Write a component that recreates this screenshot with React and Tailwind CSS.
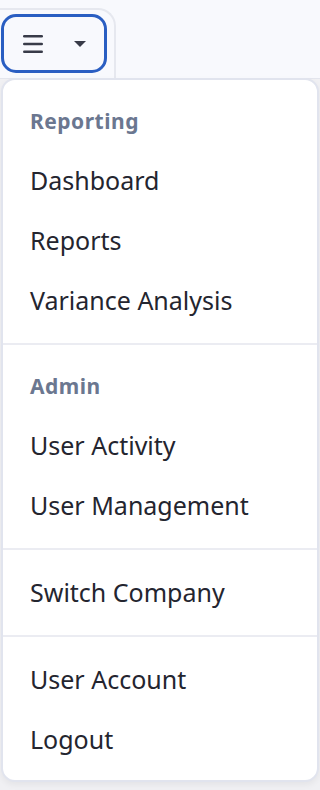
import React from "react";

const sections = [
  { title: "Reporting", items: ["Dashboard", "Reports", "Variance Analysis"] },
  { title: "Admin", items: ["User Activity", "User Management"] },
  { items: ["Switch Company"] },
  { items: ["User Account", "Logout"] },
];

function Hamburger() {
  return (
    <svg width="20" height="20" viewBox="0 0 20 20" className="block">
      <rect x="0" y="1" width="20" height="2.6" rx="1.3" fill="#383b48" />
      <rect x="0" y="8.7" width="20" height="2.6" rx="1.3" fill="#383b48" />
      <rect x="0" y="16.4" width="20" height="2.6" rx="1.3" fill="#383b48" />
    </svg>
  );
}

function Caret() {
  return (
    <svg width="12" height="6" viewBox="0 0 12 6" className="block">
      <path d="M0 0 L12 0 L6 6 Z" fill="#383b48" />
    </svg>
  );
}

export default function App() {
  return (
    <div className="min-h-[790px] w-[320px] bg-[#f0f0f3] font-['Noto_Sans','Liberation_Sans',sans-serif]">
      <div className="h-[79px] bg-[#f8f9fd] border-b border-[#e3e5ed] pt-[8px]">
        <div className="ml-[-20px] w-[136px] h-[71px] border-2 border-b-0 border-[#e6e8ef] rounded-tr-[18px] pt-[4px] pl-[19px]">
          <button className="w-[106px] h-[59px] border-[3px] border-[#2a5ec2] rounded-[15px] flex items-center pl-[19px] bg-[#f8f9fd]">
            <Hamburger />
            <span className="ml-[31px]"><Caret /></span>
          </button>
        </div>
      </div>
      <div className="mx-[1px] -mt-px bg-white border-2 border-[#e1e4ee] rounded-[14px] shadow-[0_3px_6px_rgba(0,0,0,0.05)]">
        {sections.map((s, i) => (
          <div
            key={i}
            className={`pt-[12px] ${i === sections.length - 1 ? "pb-[11px]" : "pb-[13px]"} ${i > 0 ? "border-t-2 border-[#ebecf2]" : ""}`}
          >
            {s.title && (
              <div className="h-[58px] pt-[2px] flex items-center px-[27px] text-[21px] font-bold tracking-[0.5px] text-[#6b7790]">
                {s.title}
              </div>
            )}
            {s.items.map((it) => (
              <div key={it} className="h-[60px] pt-[2px] flex items-center px-[27px] text-[25px] text-[#24252f]">
                {it}
              </div>
            ))}
          </div>
        ))}
      </div>
    </div>
  );
}
